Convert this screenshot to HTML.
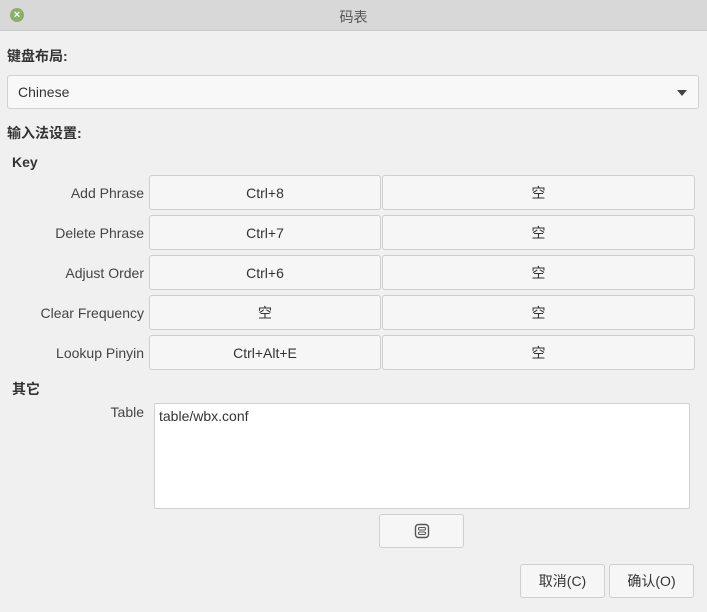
<!DOCTYPE html>
<html><head><meta charset="utf-8"><style>
body{margin:0;width:707px;height:612px;background:#f0f0f0;font-family:"Liberation Sans","Noto Sans CJK SC",sans-serif;font-size:14px;color:#3c3c3c;position:relative;overflow:hidden}
.a{position:absolute}
.title{left:0;top:0;width:707px;height:30px;background:#d8d8d8;border-bottom:1px solid #c8c8c8}
.btn{position:absolute;background:#f6f6f6;border:1px solid #cfcfcf;border-radius:3px;box-sizing:border-box;display:flex;align-items:center;justify-content:center;color:#333}
.lbl{position:absolute;right:563px;text-align:right;color:#444}
</style></head><body>
<div class="a title"></div>
<div class="a" style="left:10px;top:8px;width:14px;height:14px;border-radius:50%;background:#8bb069;color:#fff;font-size:11px;line-height:14px;text-align:center;font-weight:bold">×</div>
<div class="a" style="left:0;width:707px;top:7px;text-align:center;color:#555;font-size:14px">码表</div>
<div class="a" style="left:7px;top:46px;font-weight:bold;color:#333">键盘布局:</div>
<div class="a" style="left:7px;top:75px;width:692px;height:34px;box-sizing:border-box;background:#f8f8f8;border:1px solid #d0d0d0;border-radius:3px"></div>
<div class="a" style="left:18px;top:84px;color:#333">Chinese</div>
<div class="a" style="left:677px;top:90px;width:0;height:0;border-left:5px solid transparent;border-right:5px solid transparent;border-top:6px solid #444"></div>
<div class="a" style="left:7px;top:123px;font-weight:bold;color:#333">输入法设置:</div>
<div class="a" style="left:12px;top:154px;font-weight:bold;color:#333">Key</div>

<div class="lbl" style="top:185px">Add Phrase</div>
<div class="btn" style="left:149px;top:175px;width:232px;height:35px">Ctrl+8</div>
<div class="btn" style="left:382px;top:175px;width:313px;height:35px">空</div>
<div class="lbl" style="top:225px">Delete Phrase</div>
<div class="btn" style="left:149px;top:215px;width:232px;height:35px">Ctrl+7</div>
<div class="btn" style="left:382px;top:215px;width:313px;height:35px">空</div>
<div class="lbl" style="top:265px">Adjust Order</div>
<div class="btn" style="left:149px;top:255px;width:232px;height:35px">Ctrl+6</div>
<div class="btn" style="left:382px;top:255px;width:313px;height:35px">空</div>
<div class="lbl" style="top:305px">Clear Frequency</div>
<div class="btn" style="left:149px;top:295px;width:232px;height:35px">空</div>
<div class="btn" style="left:382px;top:295px;width:313px;height:35px">空</div>
<div class="lbl" style="top:345px">Lookup Pinyin</div>
<div class="btn" style="left:149px;top:335px;width:232px;height:35px">Ctrl+Alt+E</div>
<div class="btn" style="left:382px;top:335px;width:313px;height:35px">空</div>

<div class="a" style="left:12px;top:379px;font-weight:bold;color:#333">其它</div>
<div class="lbl" style="top:404px">Table</div>
<div class="a" style="left:154px;top:403px;width:536px;height:106px;box-sizing:border-box;background:#fff;border:1px solid #d0d0d0;border-radius:2px;padding:4px 4px;color:#333">table/wbx.conf</div>
<div class="btn" style="left:379px;top:514px;width:85px;height:34px"><svg width="16" height="16" viewBox="0 0 16 16"><rect x="1.5" y="1.5" width="13" height="13" rx="3" fill="none" stroke="#555" stroke-width="1.4"/><rect x="4.5" y="4.5" width="7" height="2.5" rx="1.2" fill="none" stroke="#555"/><rect x="4.5" y="9" width="7" height="2.5" rx="1.2" fill="none" stroke="#555"/></svg></div>
<div class="btn" style="left:520px;top:564px;width:85px;height:34px">取消(C)</div>
<div class="btn" style="left:609px;top:564px;width:85px;height:34px">确认(O)</div>
</body></html>
